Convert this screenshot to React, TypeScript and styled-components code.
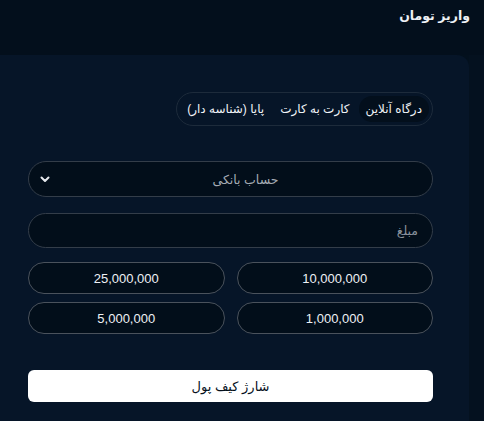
import * as React from 'react'
import styled, { createGlobalStyle } from 'styled-components'

const GlobalStyle = createGlobalStyle`
  html, body {
    margin: 0;
    padding: 0;
    background: #03101d;
  }
  body {
    font-family: "Liberation Sans", "DejaVu Sans", sans-serif;
  }
  * {
    box-sizing: border-box;
  }
`

const tabs = ['درگاه آنلاین', 'کارت به کارت', 'پایا (شناسه دار)']
const amounts = ['10,000,000', '25,000,000', '1,000,000', '5,000,000']

const App = () => {
  const [active, setActive] = React.useState(0)
  return (
    <>
      <GlobalStyle />
      <Page dir="rtl">
        <Header>
          <Title>واریز تومان</Title>
        </Header>
        <Body>
          <Panel>
            <TabRow>
              <Tabs>
                {tabs.map((t, i) => (
                  <Tab key={t} active={i === active} onClick={() => setActive(i)}>
                    {t}
                  </Tab>
                ))}
              </Tabs>
            </TabRow>
            <Form>
              <Select>
                <SelectText>حساب بانکی</SelectText>
                <Chevron viewBox="0 0 12 12">
                  <path
                    d="M2.5 4.5 L6 8 L9.5 4.5"
                    fill="none"
                    stroke="#e6e9ee"
                    strokeWidth="2"
                    strokeLinecap="round"
                    strokeLinejoin="round"
                  />
                </Chevron>
              </Select>
              <Input placeholder="مبلغ" />
              <Amounts>
                {amounts.map(a => (
                  <Amount key={a}>{a}</Amount>
                ))}
              </Amounts>
            </Form>
            <Submit>شارژ کیف پول</Submit>
          </Panel>
          <Strip />
        </Body>
      </Page>
    </>
  )
}

const Page = styled.div`
  width: 484px;
  height: 421px;
  display: flex;
  flex-direction: column;
  background: #03101d;
  overflow: hidden;
`

const Header = styled.div`
  height: 55px;
  display: flex;
  align-items: flex-start;
  padding: 8px 14px 0;
  background: #030f1c;
`

const Title = styled.h1`
  margin: 0;
  font-size: 12.5px;
  font-weight: bold;
  color: #eef1f5;
`

const Body = styled.div`
  flex: 1;
  display: flex;
  flex-direction: row-reverse;
  justify-content: flex-end;
`

const Panel = styled.div`
  width: 469px;
  background: #061528;
  border-top-right-radius: 12px;
  padding: 37px 36px 0 28px;
  display: flex;
  flex-direction: column;
`

const Strip = styled.div`
  flex: 1;
  background: #04111f;
`

const TabRow = styled.div`
  display: flex;
  justify-content: flex-start;
`

const Tabs = styled.div`
  display: flex;
  align-items: center;
  gap: 2px;
  height: 34px;
  padding: 0 3px;
  border: 1px solid #1d2b3b;
  border-radius: 17px;
  background: #061528;
`

const Tab = styled.button<{ active?: boolean }>`
  height: 26px;
  padding: 0 7px;
  border: none;
  border-radius: 13px;
  font-family: inherit;
  font-size: 12px;
  font-weight: normal;
  color: #f1f4f8;
  background: ${p => (p.active ? '#030f1c' : 'transparent')};
  cursor: pointer;
`

const Form = styled.div`
  margin-top: 35px;
  display: flex;
  flex-direction: column;
`

const Select = styled.div`
  position: relative;
  height: 36px;
  display: flex;
  align-items: center;
  justify-content: center;
  padding-left: 30px;
  border: 1px solid #333d49;
  border-radius: 18px;
  background: #020e1a;
`

const SelectText = styled.span`
  font-size: 12.5px;
  color: #a4abb4;
`

const Chevron = styled.svg`
  position: absolute;
  left: 10px;
  top: 11px;
  width: 12px;
  height: 12px;
`

const Input = styled.input`
  margin-top: 16px;
  height: 35px;
  padding: 0 14px;
  border: 1px solid #333d49;
  border-radius: 18px;
  background: #020e1a;
  font-family: inherit;
  font-size: 12.5px;
  color: #e6e9ee;
  outline: none;
  &::placeholder {
    color: #8a929c;
  }
`

const Amounts = styled.div`
  margin-top: 14px;
  display: grid;
  grid-template-columns: 1fr 1fr;
  column-gap: 12px;
  row-gap: 8px;
`

const Amount = styled.button`
  height: 32px;
  border: 1px solid #4a525c;
  border-radius: 16px;
  background: #020e1a;
  font-family: "Liberation Sans", "DejaVu Sans", sans-serif;
  font-size: 13px;
  color: #eef1f5;
  cursor: pointer;
`

const Submit = styled.button`
  margin-top: 36px;
  height: 32px;
  border: none;
  border-radius: 6px;
  background: #ffffff;
  font-family: inherit;
  font-size: 13px;
  font-weight: normal;
  color: #06101c;
  cursor: pointer;
`

export default App
